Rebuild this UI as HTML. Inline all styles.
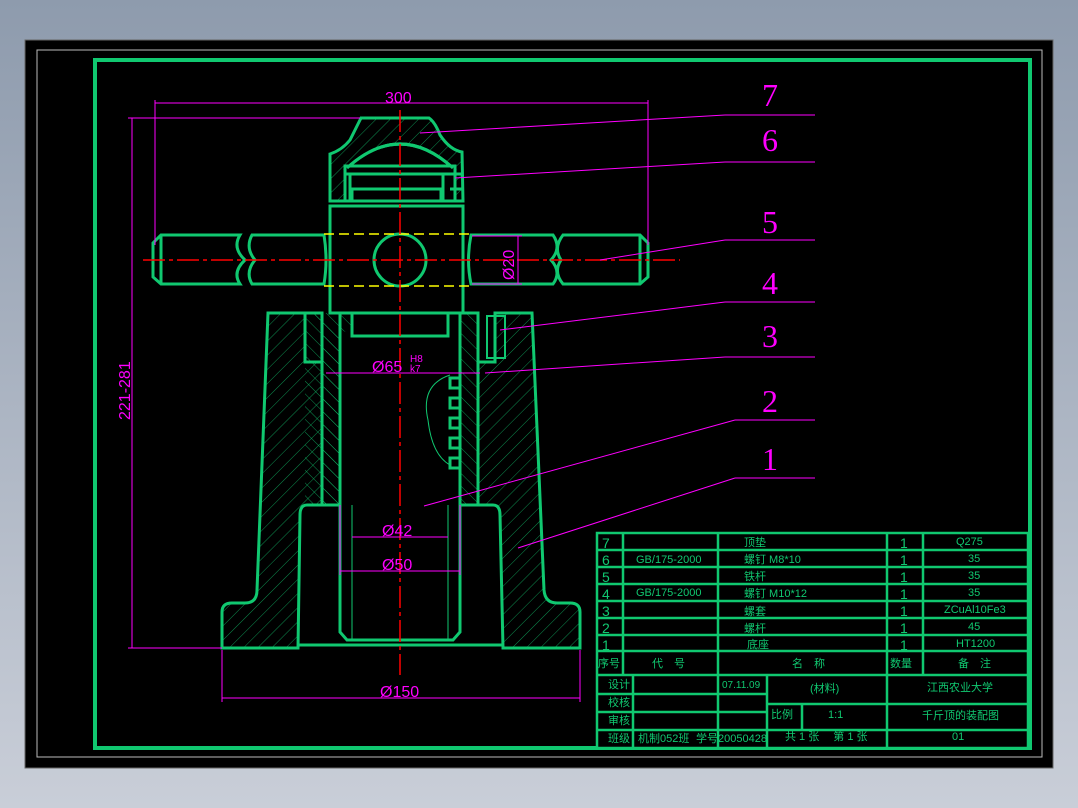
<!DOCTYPE html>
<html><head><meta charset="utf-8"><style>
html,body{margin:0;padding:0;width:1078px;height:808px;overflow:hidden;background:linear-gradient(#8e9bad,#c9ced8);}
svg{display:block}
text{font-family:"Liberation Sans","Noto Sans CJK SC",sans-serif;}
text.n{font-family:"Liberation Serif",serif;}
</style></head><body>
<svg width="1078" height="808" viewBox="0 0 1078 808">
<defs>
<pattern id="h" width="10" height="10" patternUnits="userSpaceOnUse" patternTransform="rotate(45)"><line x1="0" y1="0" x2="0" y2="10" stroke="#10c870" stroke-width="0.7"/></pattern>
<pattern id="h2" width="9" height="9" patternUnits="userSpaceOnUse" patternTransform="rotate(-45)"><line x1="0" y1="0" x2="0" y2="9" stroke="#10c870" stroke-width="0.7"/></pattern>
</defs>
<rect x="25" y="40" width="1028" height="728" fill="#000" stroke="#666" stroke-width="1"/>
<rect x="37" y="50" width="1005" height="707" fill="none" stroke="#bbb" stroke-width="1"/>
<rect x="95" y="60" width="935" height="688" fill="none" stroke="#10c870" stroke-width="4"/>

<g fill="none" stroke="#10c870" stroke-width="3">
<path d="M268,313 L305,313 L305,362 L322,362 L322,505 L307,505 Q300,505 300,515 L298,648 L222,648 L222,612 Q222,603 232,603 L245,603 Q257,603 257,590 Z" fill="url(#h)"/>
<path d="M532,313 L495,313 L495,362 L478,362 L478,505 L493,505 Q500,505 500,515 L503,648 L580,648 L580,612 Q580,603 570,603 L557,603 Q545,603 544,590 Z" fill="url(#h)"/>
<path d="M305,313 L322,313 L322,505 L340,505 L340,313 L352,313 L352,335" fill="url(#h2)"/>
<path d="M478,313 L460,313 L460,505 L478,505 Z" fill="url(#h2)"/>
<rect x="305" y="313" width="35" height="192" fill="url(#h2)" stroke="none"/>
<path d="M340,313 L340,632 L347,640 L453,640 L460,632 L460,313"/>
<line x1="298" y1="645" x2="503" y2="645"/>
<rect x="352" y="313" width="96" height="23"/>
<rect x="487" y="316" width="18" height="42" stroke-width="2"/>
<rect x="330" y="206" width="133" height="107"/>
<path d="M361,118 L429,118 Q435,122 440,135 Q450,150 462,152 L463,201 L330,201 L330,154 Q342,150 350,140 Q357,126 361,118 Z" fill="url(#h)"/>
<path d="M347,168 Q400,120 453,168 Z" fill="#000"/>
<rect x="345" y="166" width="110" height="35" fill="#000"/>
<rect x="345" y="166" width="110" height="8"/>
<rect x="350" y="174" width="93" height="27"/>
<rect x="352" y="189" width="89" height="12"/>
<line x1="450" y1="174" x2="463" y2="174"/>
<line x1="450" y1="189" x2="463" y2="189"/>
<path d="M347,168 Q400,120 453,168"/>
<path d="M161,235 L240,235 Q232,248 245,260 Q232,272 240,284 L161,284 L153,277 L153,243 Z" fill="#000"/>
<path d="M252,235 L324,235 Q328,260 324,284 L252,284 Q245,272 255,260 Q245,248 252,235 Z" fill="#000"/>
<path d="M471,235 L553,235 Q562,248 551,260 Q562,272 553,284 L471,284 Q466,260 471,235 Z" fill="#000"/>
<path d="M563,235 L640,235 L648,243 L648,277 L640,284 L563,284 Q553,272 561,260 Q553,248 563,235 Z" fill="#000"/>
<line x1="161" y1="235" x2="161" y2="284"/><line x1="640" y1="235" x2="640" y2="284"/>
<circle cx="400" cy="260" r="26"/>
</g>
<g fill="none" stroke="#10c870" stroke-width="3">
<path d="M460,378 h-10 v10 h10 M460,398 h-10 v10 h10 M460,418 h-10 v10 h10 M460,438 h-10 v10 h10 M460,458 h-10 v10 h10"/>
</g>
<path d="M450,375 Q420,385 428,420 Q432,455 450,465" fill="none" stroke="#10c870" stroke-width="1"/>
<line x1="352" y1="505" x2="352" y2="640" stroke="#10c870" stroke-width="1"/>
<line x1="448" y1="505" x2="448" y2="640" stroke="#10c870" stroke-width="1"/>
<g stroke="#ffff00" stroke-width="1.5" stroke-dasharray="10,5"><line x1="324" y1="234" x2="472" y2="234"/><line x1="324" y1="286" x2="472" y2="286"/></g>
<g stroke="#ff0000" stroke-width="1.5" stroke-dasharray="22,4,4,4">
<line x1="400" y1="110" x2="400" y2="675"/>
<line x1="143" y1="260" x2="680" y2="260"/>
</g>
<g stroke="#ff00ff" stroke-width="1" fill="none">
<line x1="155" y1="103" x2="648" y2="103"/><line x1="155" y1="100" x2="155" y2="245"/><line x1="648" y1="100" x2="648" y2="245"/>
<line x1="128" y1="118" x2="360" y2="118"/><line x1="132" y1="118" x2="132" y2="648"/><line x1="128" y1="648" x2="222" y2="648"/>
<line x1="222" y1="650" x2="222" y2="702"/><line x1="580" y1="650" x2="580" y2="702"/><line x1="222" y1="698" x2="580" y2="698"/>
<line x1="340" y1="505" x2="340" y2="575"/><line x1="460" y1="505" x2="460" y2="575"/><line x1="340" y1="571" x2="460" y2="571"/>
<line x1="352" y1="537" x2="448" y2="537"/>
<line x1="326" y1="373" x2="480" y2="373"/>
<line x1="472" y1="236" x2="522" y2="236"/><line x1="472" y1="284" x2="522" y2="284"/><line x1="518" y1="236" x2="518" y2="284"/>
<line x1="420" y1="133" x2="725" y2="115"/><line x1="725" y1="115" x2="815" y2="115"/>
<line x1="455" y1="178" x2="725" y2="162"/><line x1="725" y1="162" x2="815" y2="162"/>
<line x1="600" y1="260" x2="725" y2="240"/><line x1="725" y1="240" x2="815" y2="240"/>
<line x1="500" y1="330" x2="725" y2="302"/><line x1="725" y1="302" x2="815" y2="302"/>
<line x1="485" y1="373" x2="725" y2="357"/><line x1="725" y1="357" x2="815" y2="357"/>
<line x1="424" y1="506" x2="735" y2="420"/><line x1="735" y1="420" x2="815" y2="420"/>
<line x1="518" y1="548" x2="735" y2="478"/><line x1="735" y1="478" x2="815" y2="478"/>
</g>
<g fill="#ff00ff" font-size="16">
<text x="385" y="103">300</text>
<text x="372" y="372">Ø65</text><text x="410" y="362" font-size="10">H8</text><text x="410" y="372" font-size="10">k7</text>
<text x="382" y="536">Ø42</text><text x="382" y="570">Ø50</text><text x="380" y="697">Ø150</text>
<text transform="translate(130,420) rotate(-90)">221-281</text>
<text transform="translate(514,280) rotate(-90)">Ø20</text>
</g>
<g fill="#ff00ff" font-size="32">
<text class="n" x="762" y="106">7</text><text class="n" x="762" y="151">6</text><text class="n" x="762" y="233">5</text><text class="n" x="762" y="294">4</text><text class="n" x="762" y="347">3</text><text class="n" x="762" y="412">2</text><text class="n" x="762" y="470">1</text>
</g>
<g stroke="#10c870" stroke-width="2.5" fill="none">
<rect x="597" y="533" width="431" height="215" fill="#000"/>
<line x1="597" y1="550" x2="1028" y2="550"/><line x1="597" y1="567" x2="1028" y2="567"/><line x1="597" y1="584" x2="1028" y2="584"/><line x1="597" y1="601" x2="1028" y2="601"/><line x1="597" y1="618" x2="1028" y2="618"/><line x1="597" y1="635" x2="1028" y2="635"/><line x1="597" y1="651" x2="1028" y2="651"/><line x1="597" y1="675" x2="1028" y2="675"/>
<line x1="623" y1="533" x2="623" y2="675"/><line x1="718" y1="533" x2="718" y2="675"/><line x1="887" y1="533" x2="887" y2="748"/><line x1="923" y1="533" x2="923" y2="675"/>
<line x1="597" y1="694" x2="767" y2="694"/><line x1="597" y1="712" x2="767" y2="712"/><line x1="597" y1="730" x2="1028" y2="730"/>
<line x1="633" y1="675" x2="633" y2="748"/><line x1="718" y1="675" x2="718" y2="748"/><line x1="767" y1="675" x2="767" y2="748"/>
<line x1="767" y1="704" x2="1028" y2="704"/><line x1="802" y1="704" x2="802" y2="730"/>
</g>
<g fill="#10c870" font-size="11">
<g font-size="14"><text x="602" y="548">7</text><text x="602" y="565">6</text><text x="602" y="582">5</text><text x="602" y="599">4</text><text x="602" y="616">3</text><text x="602" y="633">2</text><text x="602" y="650">1</text></g>
<g font-size="14"><text x="900" y="548">1</text><text x="900" y="565">1</text><text x="900" y="582">1</text><text x="900" y="599">1</text><text x="900" y="616">1</text><text x="900" y="633">1</text><text x="900" y="650">1</text></g>
<text x="636" y="563">GB/175-2000</text><text x="636" y="596">GB/175-2000</text>
<text x="744" y="546">顶垫</text><text x="744" y="563">螺钉 M8*10</text><text x="744" y="580">铁杆</text><text x="744" y="597">螺钉 M10*12</text><text x="744" y="615">螺套</text><text x="744" y="632">螺杆</text><text x="747" y="648">底座</text>
<text x="956" y="545">Q275</text><text x="968" y="562">35</text><text x="968" y="579">35</text><text x="968" y="596">35</text><text x="944" y="613">ZCuAl10Fe3</text><text x="968" y="630">45</text><text x="956" y="647">HT1200</text>
<text x="598" y="667">序号</text><text x="652" y="667">代　号</text><text x="792" y="667">名　称</text><text x="890" y="667">数量</text><text x="958" y="667">备　注</text>
<text x="608" y="688">设计</text><text x="608" y="706">校核</text><text x="608" y="724">审核</text><text x="608" y="742">班级</text>
<text x="722" y="688" font-size="10">07.11.09</text><text x="638" y="742">机制052班</text><text x="696" y="742">学号20050428</text>
<text x="810" y="692">(材料)</text><text x="771" y="718">比例</text><text x="828" y="718">1:1</text><text x="785" y="740">共 1 张　 第 1 张</text>
<text x="927" y="691">江西农业大学</text><text x="922" y="719">千斤顶的装配图</text><text x="952" y="740">01</text>
</g>
</svg>
</body></html>
